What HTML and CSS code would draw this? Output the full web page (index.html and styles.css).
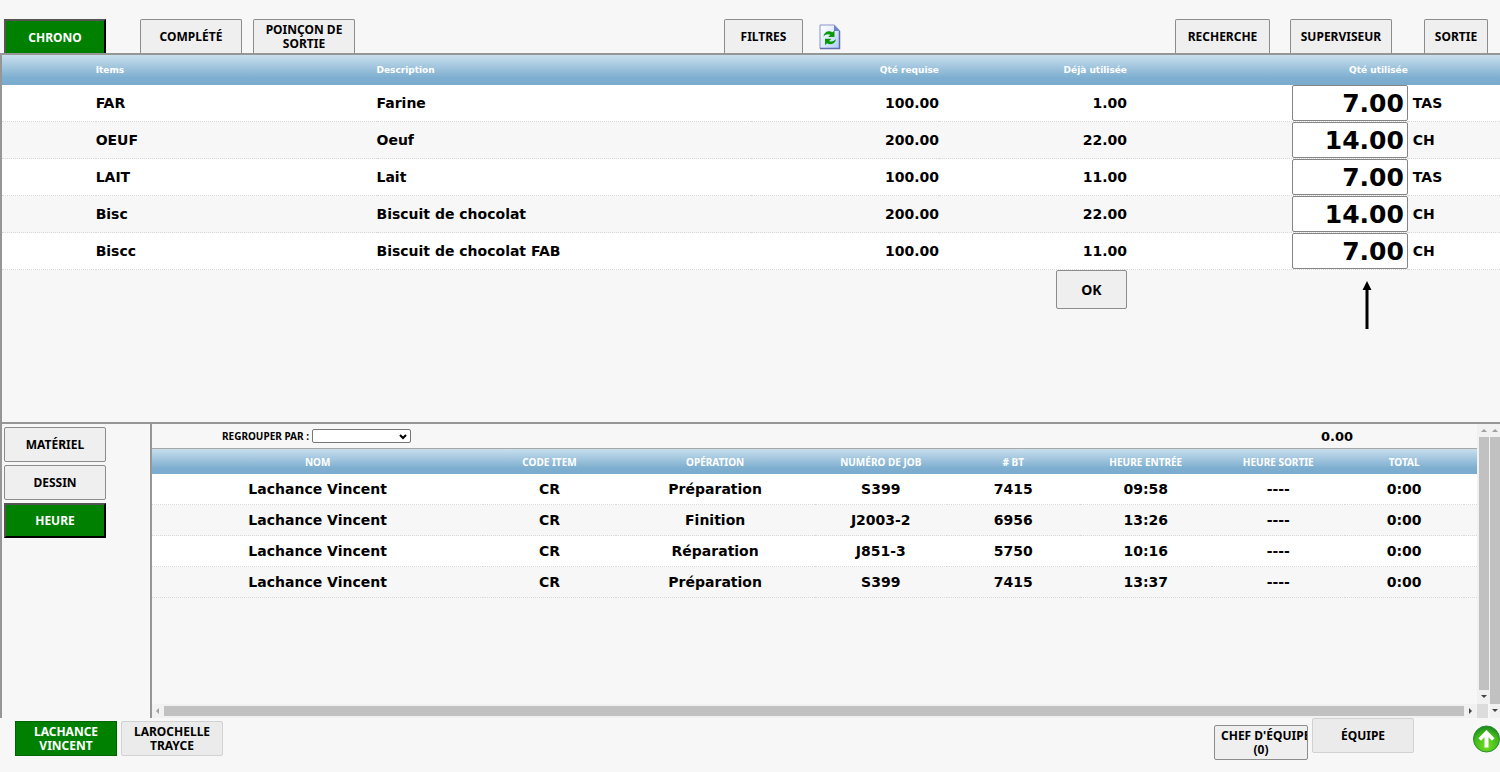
FILE: index.html
```html
<!DOCTYPE html>
<html lang="fr">
<head>
<meta charset="utf-8">
<meta name="viewport" content="width=device-width, initial-scale=1">
<title>Chrono</title>
<link rel="stylesheet" href="styles.css">
</head>
<body>
<header class="toolbar">
  <nav class="tabs">
    <button class="btn tab active">CHRONO</button>
    <button class="btn tab spaced">COMPLÉTÉ</button>
    <button class="btn tab">POINÇON DE SORTIE</button>
  </nav>
  <div class="filters">
    <button class="btn tab medium">FILTRES</button>
    <button class="refresh" aria-label="Rafraîchir">
      <svg width="22" height="26" viewBox="0 0 22 26">
        <defs>
          <linearGradient id="paper" x1="0" y1="0" x2="1" y2="1"><stop offset="0" stop-color="#fff"/><stop offset=".5" stop-color="#dfeaff"/><stop offset="1" stop-color="#a9c8fb"/></linearGradient>
        </defs>
        <path d="M1 1H15.500L20.500 6.500V24.500H1Z" fill="url(#paper)" stroke="#8795c8"/>
        <path d="M20.500 7V24.500H1" fill="none" stroke="#606eaa" stroke-width="1.500"/>
        <path d="M15 1V7H21Z" fill="#6d83c4"/>
        <path d="M4.500 12.500C5 8 9.500 5.800 13.500 8.200L15.500 6.500V13H9.200L11.300 10.800C8.800 9.600 6.600 10.300 4.500 12.500Z" fill="#089808"/>
        <path d="M17 15C16.500 19.500 12 21.500 8 19.300L6 21.300V14.800H12.300L10.200 16.900C12.800 18.200 15 17.300 17 15Z" fill="#089808"/>
      </svg>
    </button>
  </div>
  <div class="session">
    <button class="btn tab search">RECHERCHE</button>
    <button class="btn tab supervisor">SUPERVISEUR</button>
    <button class="btn tab small">SORTIE</button>
  </div>
</header>

<main class="workspace">
  <section class="materials">
    <table class="items">
      <colgroup><col class="w6"><col class="w19"><col class="w25"><col class="w12"><col class="w12"><col class="w19"><col></colgroup>
      <thead>
        <tr><th></th><th>Items</th><th>Description</th><th class="num">Qté requise</th><th class="num">Déjà utilisée</th><th class="num">Qté utilisée</th><th></th></tr>
      </thead>
      <tbody>
        <tr><td></td><td>FAR</td><td>Farine</td><td class="num">100.00</td><td class="num">1.00</td><td class="num"><input class="qty" aria-label="Qté utilisée FAR" value="7.00"></td><td class="unit">TAS</td></tr>
        <tr><td></td><td>OEUF</td><td>Oeuf</td><td class="num">200.00</td><td class="num">22.00</td><td class="num"><input class="qty" aria-label="Qté utilisée OEUF" value="14.00"></td><td class="unit">CH</td></tr>
        <tr><td></td><td>LAIT</td><td>Lait</td><td class="num">100.00</td><td class="num">11.00</td><td class="num"><input class="qty" aria-label="Qté utilisée LAIT" value="7.00"></td><td class="unit">TAS</td></tr>
        <tr><td></td><td>Bisc</td><td>Biscuit de chocolat</td><td class="num">200.00</td><td class="num">22.00</td><td class="num"><input class="qty" aria-label="Qté utilisée Bisc" value="14.00"></td><td class="unit">CH</td></tr>
        <tr><td></td><td>Biscc</td><td>Biscuit de chocolat FAB</td><td class="num">100.00</td><td class="num">11.00</td><td class="num"><input class="qty" aria-label="Qté utilisée Biscc" value="7.00"></td><td class="unit">CH</td></tr>
      </tbody>
      <tfoot>
        <tr>
          <td colspan="4"></td>
          <td class="num"><button class="btn ok">OK</button></td>
          <td class="num"><svg class="pointer" width="10" height="48" viewBox="0 0 10 48"><path d="M5 0L9.500 9H6.500V48H3.500V9H.5Z"/></svg></td>
          <td></td>
        </tr>
      </tfoot>
    </table>
  </section>

  <section class="details">
    <nav class="side">
      <button class="btn">MATÉRIEL</button>
      <button class="btn">DESSIN</button>
      <button class="btn active">HEURE</button>
    </nav>
    <div class="times">
      <div class="pane">
        <div class="grouping">
          <label for="group">REGROUPER PAR :</label>
          <span class="select-box">
            <select id="group"><option></option></select>
            <svg width="8" height="6" viewBox="0 0 8 6"><path d="M1 1L4 4L7 1" fill="none" stroke="#000" stroke-width="2"/></svg>
          </span>
          <span class="sum">0.00</span>
        </div>
        <table class="hours">
          <colgroup><col class="w25"><col class="w10"><col class="w15"><col class="w10"><col class="w10"><col class="w10"><col class="w10"><col class="w9"><col class="w1"></colgroup>
          <thead>
            <tr><th>NOM</th><th>CODE ITEM</th><th>OPÉRATION</th><th>NUMÉRO DE JOB</th><th># BT</th><th>HEURE ENTRÉE</th><th>HEURE SORTIE</th><th>TOTAL</th><th></th></tr>
          </thead>
          <tbody>
            <tr><td>Lachance Vincent</td><td>CR</td><td>Préparation</td><td>S399</td><td>7415</td><td>09:58</td><td>----</td><td>0:00</td><td></td></tr>
            <tr><td>Lachance Vincent</td><td>CR</td><td>Finition</td><td>J2003-2</td><td>6956</td><td>13:26</td><td>----</td><td>0:00</td><td></td></tr>
            <tr><td>Lachance Vincent</td><td>CR</td><td>Réparation</td><td>J851-3</td><td>5750</td><td>10:16</td><td>----</td><td>0:00</td><td></td></tr>
            <tr><td>Lachance Vincent</td><td>CR</td><td>Préparation</td><td>S399</td><td>7415</td><td>13:37</td><td>----</td><td>0:00</td><td></td></tr>
          </tbody>
        </table>
      </div>
      <div class="scroll vertical inner" aria-hidden="true"><i class="arrow up"></i><i class="thumb"></i><i class="arrow down"></i></div>
      <div class="scroll horizontal" aria-hidden="true"><i class="arrow left"></i><i class="thumb"></i><i class="arrow right"></i></div>
      <div class="corner"></div>
    </div>
    <div class="scroll vertical outer" aria-hidden="true"><i class="arrow up"></i><i class="thumb"></i><i class="arrow down"></i></div>
  </section>
</main>

<footer class="crew">
  <button class="btn user selected">LACHANCE VINCENT</button>
  <button class="btn user faded">LAROCHELLE TRAYCE</button>
  <button class="btn chief">CHEF D'ÉQUIPE<br>(0)</button>
  <button class="btn team faded">ÉQUIPE</button>
  <button class="top" aria-label="Haut de page">
    <svg width="27" height="28" viewBox="0 0 27 28">
      <defs><radialGradient id="green" cx=".5" cy=".75" r=".7"><stop offset="0" stop-color="#72df22"/><stop offset=".7" stop-color="#3fb71b"/><stop offset="1" stop-color="#218d20"/></radialGradient></defs>
      <circle cx="13.500" cy="14" r="13" fill="url(#green)" stroke="#2a8f2c"/>
      <path d="M13.500 5L21.500 13.200L19 15.800L15.500 12.300V22.500H11.500V12.300L8 15.800L5.500 13.200Z" fill="#fff"/>
    </svg>
  </button>
</footer>
</body>
</html>
```
FILE: styles.css
```css
* { box-sizing: border-box; }

body {
  margin: 0;
  min-height: 100vh;
  display: flex;
  flex-direction: column;
  background: #f7f7f7;
  color: #000;
  font: bold 14px "DejaVu Sans", Verdana, sans-serif;
}

.btn {
  width: 102px;
  height: 35px;
  flex: none;
  padding: 2px 6px 1px;
  border: 1px solid #8c8c8c;
  border-radius: 2px;
  background: #efefef;
  color: #000;
  font: bold 12px/14px "Noto Sans", Tahoma, sans-serif;
  text-align: center;
}

.btn.active {
  border: 2px outset #333;
  border-color: #555 #000 #000 #555;
  border-radius: 0;
  background: #008000;
  color: #fff;
}

.btn.selected {
  border: 1px solid #006400;
  border-radius: 0;
  background: #008000;
  color: #fff;
}

.btn.faded { border-color: #d2d2d2; background: #ebebeb; }

/* Top bar */
.toolbar {
  display: grid;
  grid-template-columns: 48% auto 1fr;
  align-items: end;
  padding-top: 19px;
  border-bottom: 2px solid #969696;
}

.tabs, .filters, .session { display: flex; }
.tabs { gap: 11px; padding-left: 4px; }
.filters { gap: 16px; padding-left: 4px; }
.session { justify-content: flex-end; gap: 20px; padding-right: 12px; }

.btn.tab { height: 34px; border-bottom: 0; border-radius: 2px 2px 0 0; }
.btn.tab.active { border-radius: 0; }
.btn.spaced { margin-left: 23px; }
.btn.medium { width: 79px; }
.btn.search { width: 95px; }
.btn.supervisor { margin-right: 12px; }
.btn.small { width: 64px; }

.refresh, .top { padding: 0; border: 0; background: none; }
.refresh { padding-top: 2px; }
.refresh svg, .top svg { display: block; }

/* Main area */
.workspace {
  flex: 1;
  display: flex;
  flex-direction: column;
  border-left: 2px solid #969696;
}

.materials { flex: 5 0 0; }

table {
  width: 100%;
  table-layout: fixed;
  border-collapse: separate;
  border-spacing: 0;
}

th, td { padding: 0; }
th { color: #fff; font-size: 9px; line-height: 12px; }
thead tr { background: linear-gradient(#c8dfed, #7fafd0 75%, #7aabcd); }
tbody td { border-bottom: 1px dotted #d8d8d8; }
tbody tr:nth-child(odd) { background: #fff; }

.w1 { width: 1%; }
.w6 { width: 6.25%; }
.w9 { width: 9%; }
.w10 { width: 10%; }
.w12 { width: 12.55%; }
.w15 { width: 15%; }
.w19 { width: 18.75%; }
.w25 { width: 25%; }

.items th { height: 30px; text-align: left; }
.items tbody td { height: 37px; }
.items .num { text-align: right; }
.items .unit { padding-left: 5px; }
.items tfoot td { vertical-align: top; }

.qty {
  display: block;
  width: 116px;
  height: 36px;
  margin-left: auto;
  padding: 0 3px;
  border: 1px solid #858585;
  border-radius: 2px;
  background: #fff;
  color: #000;
  font: bold 25px "DejaVu Sans", Verdana, sans-serif;
  text-align: right;
}

.btn.ok { width: 71px; height: 39px; font-size: 14px; }
.pointer { margin: 11px 36px 0 0; }

/* Lower area */
.details {
  flex: 4 0 0;
  display: flex;
  border-top: 2px solid #969696;
}

.side {
  flex: none;
  width: 150px;
  display: flex;
  flex-direction: column;
  gap: 3px;
  padding: 3px 2px;
  border-right: 2px solid #969696;
}

.times {
  flex: 1;
  display: grid;
  grid-template: 1fr 14px / 1fr 13px;
}

.grouping {
  display: flex;
  align-items: center;
  height: 25px;
  padding-left: 70px;
  border-bottom: 1px solid #a8a8a8;
  font: bold 10px "Noto Sans", Tahoma, sans-serif;
}

.select-box { position: relative; margin-left: 3px; }
.select-box svg { position: absolute; right: 4px; top: 5px; pointer-events: none; }

.select-box select {
  display: block;
  appearance: none;
  width: 99px;
  height: 14px;
  border: 1px solid #767676;
  border-radius: 2px;
  background: #fff;
}

.sum {
  margin: 0 9% 0 auto;
  padding-right: 11px;
  font: bold 13px "DejaVu Sans", Verdana, sans-serif;
}

.hours { text-align: center; }
.hours th { height: 25px; font-family: "Noto Sans", Tahoma, sans-serif; font-size: 10px; }
.hours tbody td { height: 31px; }

.scroll { display: flex; align-items: center; background: #f1f1f1; }
.scroll .thumb { flex: 1; background: #c1c1c1; }
.vertical { flex-direction: column; padding: 5px 0 6px; gap: 5px; }
.vertical .thumb { width: 10px; }
.outer { width: 10px; }
.horizontal { gap: 5px; padding: 0 5px 0 4px; }
.horizontal .thumb { height: 10px; }
.corner { background: #dcdcdc; margin: 0 2px 0 0; }

.arrow { border: 3px solid transparent; }
.up { border-top: 0; border-bottom-color: #a0a0a0; }
.down { border-bottom: 0; border-top-color: #444; }
.left { border-left: 0; border-right-color: #a0a0a0; }
.right { border-right: 0; border-left-color: #444; }

/* Footer */
.crew {
  display: flex;
  align-items: flex-start;
  gap: 4px;
  height: 54px;
  padding: 0 0 0 15px;
}

.user { margin-top: 3px; }
.chief { margin-top: 7px; margin-left: auto; }
.btn.chief { width: 94px; overflow: hidden; white-space: nowrap; }
.top { margin: 7px 0 0 55px; }
```
